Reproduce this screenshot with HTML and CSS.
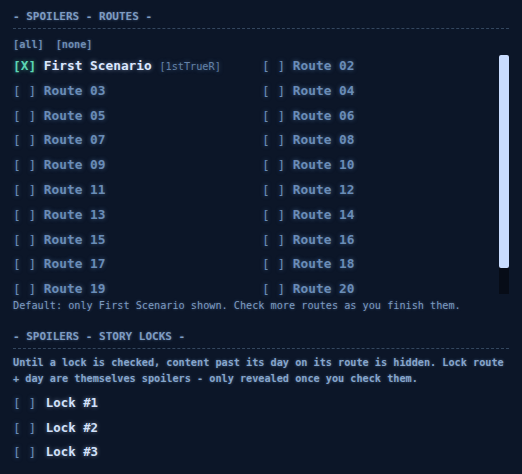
FILE: index.html
```html
<!DOCTYPE html>
<html>
<head>
<meta charset="utf-8">
<link rel="stylesheet" href="styles.css">
</head>
<body>
<div class="panel">
  <h2 class="sec-title">- SPOILERS - ROUTES -</h2>
  <div class="controls"><span class="ctl">[all]</span><span class="ctl">[none]</span></div>
  <div class="route-box">
    <div class="route-list">
      <div class="route-grid">
        <div class="item on"><span class="box">[X]</span> <span class="name">First Scenario</span> <span class="tag">[1stTrueR]</span></div>
        <div class="item"><span class="box">[ ]</span> <span class="name">Route 02</span></div>
        <div class="item"><span class="box">[ ]</span> <span class="name">Route 03</span></div>
        <div class="item"><span class="box">[ ]</span> <span class="name">Route 04</span></div>
        <div class="item"><span class="box">[ ]</span> <span class="name">Route 05</span></div>
        <div class="item"><span class="box">[ ]</span> <span class="name">Route 06</span></div>
        <div class="item"><span class="box">[ ]</span> <span class="name">Route 07</span></div>
        <div class="item"><span class="box">[ ]</span> <span class="name">Route 08</span></div>
        <div class="item"><span class="box">[ ]</span> <span class="name">Route 09</span></div>
        <div class="item"><span class="box">[ ]</span> <span class="name">Route 10</span></div>
        <div class="item"><span class="box">[ ]</span> <span class="name">Route 11</span></div>
        <div class="item"><span class="box">[ ]</span> <span class="name">Route 12</span></div>
        <div class="item"><span class="box">[ ]</span> <span class="name">Route 13</span></div>
        <div class="item"><span class="box">[ ]</span> <span class="name">Route 14</span></div>
        <div class="item"><span class="box">[ ]</span> <span class="name">Route 15</span></div>
        <div class="item"><span class="box">[ ]</span> <span class="name">Route 16</span></div>
        <div class="item"><span class="box">[ ]</span> <span class="name">Route 17</span></div>
        <div class="item"><span class="box">[ ]</span> <span class="name">Route 18</span></div>
        <div class="item"><span class="box">[ ]</span> <span class="name">Route 19</span></div>
        <div class="item"><span class="box">[ ]</span> <span class="name">Route 20</span></div>
      </div>
    </div>
    <div class="scrollbar"><div class="thumb"></div></div>
  </div>
  <p class="note">Default: only First Scenario shown. Check more routes as you finish them.</p>

  <h2 class="sec-title second">- SPOILERS - STORY LOCKS -</h2>
  <p class="desc">Until a lock is checked, content past its day on its route is hidden. Lock route + day are themselves spoilers - only revealed once you check them.</p>
  <div class="locks">
    <div class="item lock"><span class="box">[ ]</span> <span class="name">Lock #1</span></div>
    <div class="item lock"><span class="box">[ ]</span> <span class="name">Lock #2</span></div>
    <div class="item lock"><span class="box">[ ]</span> <span class="name">Lock #3</span></div>
  </div>
</div>
</body>
</html>
```
FILE: styles.css
```css
html, body {
  margin: 0;
  padding: 0;
  background: #0c1628;
}
body {
  width: 522px;
  height: 474px;
  overflow: hidden;
  font-family: "DejaVu Sans Mono", "Liberation Mono", monospace;
  color: #7896bd;
}
.panel {
  padding: 10px 13px 0 13px;
}
.sec-title {
  margin: 0;
  font-size: 11px;
  line-height: 14px;
  font-weight: bold;
  color: #7f9cc2;
  padding-bottom: 4px;
  border-bottom: 1px dashed #34475f;
  text-shadow: 0 0 3px rgba(120, 160, 210, 0.45);
}
.sec-title.second {
  margin-top: 17px;
}
.controls {
  margin-top: 10px;
  display: flex;
  gap: 12px;
  font-size: 10.2px;
  line-height: 12px;
  font-weight: bold;
  color: #6f8db3;
  text-shadow: 0 0 3px rgba(110, 150, 200, 0.45);
}
.route-box {
  margin-top: 4px;
  height: 239px;
  display: flex;
}
.route-list {
  flex: 1;
}
.scrollbar {
  width: 10px;
  background: #070c17;
}
.thumb {
  height: 213px;
  background: #c9dcff;
  border-radius: 2px;
}
.route-grid {
  display: grid;
  grid-template-columns: 237px 237px;
  column-gap: 12px;
  row-gap: 6.8px;
  padding-top: 2px;
}
.item {
  height: 18px;
  line-height: 18px;
  font-size: 12.8px;
  font-weight: bold;
  white-space: pre;
  color: #6a8cb6;
  text-shadow: 0 0 4px rgba(100, 145, 200, 0.55);
}
.item .box {
  font-weight: normal;
  color: #6a8cb6;
}
.item.on .box {
  color: #5cd6b4;
  font-weight: bold;
  text-shadow: 0 0 4px rgba(80, 210, 170, 0.6);
}
.item.on .name {
  color: #dce8ff;
  text-shadow: 0 0 4px rgba(200, 220, 255, 0.5);
}
.item .tag {
  font-size: 10.2px;
  font-weight: normal;
  color: #6583a8;
}
.note {
  margin: 5px 0 0 0;
  font-size: 10.2px;
  line-height: 14px;
  color: #7d9ac0;
  text-shadow: 0 0 3px rgba(120, 160, 210, 0.45);
}
.desc {
  margin: 6px 0 0 0;
  font-size: 10.2px;
  line-height: 16px;
  font-weight: bold;
  color: #86a5cb;
  text-shadow: 0 0 3px rgba(130, 170, 220, 0.45);
}
.locks {
  margin-top: 4px;
}
.item.lock {
  height: 24.5px;
  line-height: 24.5px;
}
.item.lock .name {
  font-size: 12.4px;
  color: #d2e1fa;
  margin-left: 2px;
  text-shadow: 0 0 4px rgba(200, 220, 255, 0.45);
}
```
